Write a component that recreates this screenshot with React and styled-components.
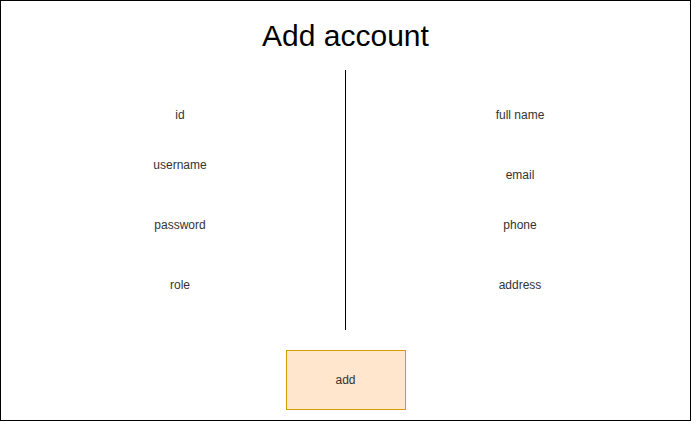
import React from 'react';
import styled, { createGlobalStyle } from 'styled-components';

const GlobalStyle = createGlobalStyle`
	html, body {
		margin: 0;
		padding: 0;
		background: #fff;
	}
	* {
		box-sizing: border-box;
	}
`;

const Frame = styled.div`
	width: 691px;
	height: 421px;
	border: 1px solid #000;
	background: #fff;
	display: flex;
	flex-direction: column;
	align-items: center;
	font-family: 'Liberation Sans', Arial, sans-serif;
`;

const Title = styled.h1`
	margin: 20px 0 0;
	font-size: 30px;
	font-weight: 400;
	line-height: 30px;
	color: #000;
`;

const Content = styled.div`
	margin-top: 19px;
	width: 100%;
	height: 260px;
	display: flex;
	padding-left: 14px;
`;

const Column = styled.div`
	width: ${(p) => p.$width}px;
	padding-left: ${(p) => p.$pad || 0}px;
	display: flex;
	flex-direction: column;
`;

const Divider = styled.div`
	width: 1px;
	height: 100%;
	background: #000;
`;

const Label = styled.div`
	margin-top: ${(p) => p.$gap}px;
	height: 20px;
	line-height: 20px;
	font-size: 12px;
	color: #333;
	text-align: center;
`;

const AddButton = styled.button`
	margin-top: 20px;
	width: 120px;
	height: 60px;
	border: 1px solid #d79b00;
	background: #ffe6cc;
	font-family: 'Liberation Sans', Arial, sans-serif;
	font-size: 12px;
	color: #333;
	padding: 0;
	cursor: pointer;
`;

const leftFields = [
	{ name: 'id', gap: 35 },
	{ name: 'username', gap: 30 },
	{ name: 'password', gap: 40 },
	{ name: 'role', gap: 40 },
];

const rightFields = [
	{ name: 'full name', gap: 35 },
	{ name: 'email', gap: 40 },
	{ name: 'phone', gap: 30 },
	{ name: 'address', gap: 40 },
];

const App = () => {
	return (
		<>
			<GlobalStyle />
			<Frame>
				<Title>Add account</Title>
				<Content>
					<Column $width={330}>
						{leftFields.map((f) => (
							<Label key={f.name} $gap={f.gap}>
								{f.name}
							</Label>
						))}
					</Column>
					<Divider />
					<Column $width={344} $pad={4}>
						{rightFields.map((f) => (
							<Label key={f.name} $gap={f.gap}>
								{f.name}
							</Label>
						))}
					</Column>
				</Content>
				<AddButton>add</AddButton>
			</Frame>
		</>
	);
};

export default App;
